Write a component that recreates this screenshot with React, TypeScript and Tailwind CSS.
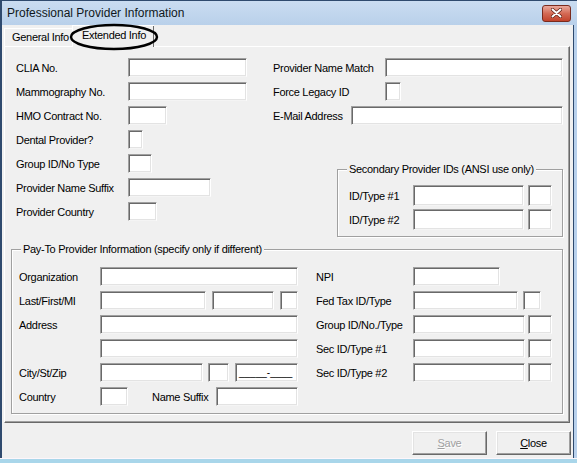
import React from 'react';
import clsx from 'clsx';

const sunken =
  'bg-white border border-t-[#a0a0a0] border-l-[#a0a0a0] border-r-white border-b-[#f4f4f4] shadow-[inset_1px_1px_0_#696969,inset_-1px_-1px_0_#e3e3e3]';

function Box({ className, tall, children }: { className: string; tall?: boolean; children?: React.ReactNode }) {
  return <div className={clsx(sunken, tall ? 'h-[21px]' : 'h-[19px]', 'shrink-0', className)}>{children}</div>;
}

function Row({ label, labelW, children, tall }: { label: string; labelW: string; children?: React.ReactNode; tall?: boolean }) {
  return (
    <div className={clsx('flex items-center', tall ? 'h-[21px]' : 'h-[19px]')}>
      <span className={clsx('shrink-0 whitespace-nowrap pt-px', labelW)}>{label}</span>
      {children}
    </div>
  );
}

function GroupBox({ title, className, children }: { title: string; className: string; children: React.ReactNode }) {
  return (
    <div className={clsx('relative border border-[#a0a0a0] shadow-[1px_1px_0_#fff,inset_1px_1px_0_#fff]', className)}>
      <span className="absolute left-[9px] top-[-8px] bg-[#f0f0f0] px-[2px] leading-[14px] whitespace-nowrap">{title}</span>
      {children}
    </div>
  );
}

function Button({ label, disabled }: { label: string; disabled?: boolean }) {
  return (
    <div className="flex h-[24px] w-[75px] items-center justify-center border border-t-white border-l-white border-r-[#696969] border-b-[#696969] bg-[#f0f0f0] shadow-[inset_-1px_-1px_0_#a0a0a0,inset_1px_1px_0_#e3e3e3]">
      <span className={disabled ? 'text-[#a0a0a0] [text-shadow:1px_1px_0_#fff]' : 'text-black'}>
        <span className="underline">{label[0]}</span>
        {label.slice(1)}
      </span>
    </div>
  );
}

export default function App() {
  return (
    <div className="relative flex h-[463px] w-[577px] flex-col overflow-hidden bg-[#b9d1ec] font-['Liberation_Sans',Arial,sans-serif] text-[11px] tracking-[-0.3px] text-black">
      {/* title bar */}
      <div className="flex h-[25px] shrink-0 items-center justify-between border-t border-l-2 border-[#2f4a6e] bg-[linear-gradient(#cadcf1,#b9d0ea)] pl-[5px] pr-[6px] tracking-normal">
        <span className="text-[12px] text-[#101820]">Professional Provider Information</span>
        <div className="flex h-[17px] w-[29px] items-center justify-center rounded-[3px] border border-[#7a2b1e] bg-[linear-gradient(#e9a99d,#d46a55_50%,#c2432c)]">
          <svg width="11" height="10" viewBox="0 0 11 10">
            <path d="M1.5 1.5 L9.5 8.5 M9.5 1.5 L1.5 8.5" stroke="#5a1a10" strokeWidth="3.4" strokeLinecap="round" />
            <path d="M1.5 1.5 L9.5 8.5 M9.5 1.5 L1.5 8.5" stroke="#fff" strokeWidth="2" strokeLinecap="round" />
          </svg>
        </div>
      </div>

      {/* client */}
      <div className="flex flex-1 border-l-2 border-[#2f4a6e]">
        <div className="flex flex-1 flex-col bg-[#f0f0f0] pl-[2px]">
          {/* tabs */}
          <div className="relative flex h-[21px] items-end">
            <div className="flex h-[18px] w-[70px] items-center border-t border-l border-white pl-[7px] shadow-[inset_-1px_0_0_#a0a0a0]">
              General Info
            </div>
            <div className="z-10 -mb-px -ml-[2px] flex h-[22px] w-[82px] items-center border-t border-l border-white bg-[#f0f0f0] pb-[2px] pl-[9px] shadow-[inset_-1px_0_0_#696969]">
              Extended Info
            </div>
          </div>

          {/* panel */}
          <div className="flex h-[377px] w-[566px] flex-col border border-t-white border-l-white border-r-[#696969] border-b-[#696969] pl-[6px] pt-[11px] shadow-[inset_-1px_-1px_0_#a0a0a0]">
            <div className="ml-[5px] flex">
              <div className="flex w-[257px] flex-col gap-[5px]">
                <Row label="CLIA No." labelW="w-[112px]"><Box className="w-[119px]" /></Row>
                <Row label="Mammography No." labelW="w-[112px]"><Box className="w-[119px]" /></Row>
                <Row label="HMO Contract No." labelW="w-[112px]"><Box className="w-[39px]" /></Row>
                <Row label="Dental Provider?" labelW="w-[112px]"><Box className="w-[15px]" /></Row>
                <Row label="Group ID/No Type" labelW="w-[112px]"><Box className="w-[24px]" /></Row>
                <Row label="Provider Name Suffix" labelW="w-[112px]"><Box className="w-[83px]" /></Row>
                <Row label="Provider Country" labelW="w-[112px]"><Box className="w-[29px]" /></Row>
              </div>
              <div className="flex flex-col gap-[5px]">
                <Row label="Provider Name Match" labelW="w-[112px]"><Box className="w-[178px]" /></Row>
                <Row label="Force Legacy ID" labelW="w-[112px]"><Box className="w-[16px]" /></Row>
                <Row label="E-Mail Address" labelW="w-[78px]"><Box className="w-[212px]" /></Row>
                <GroupBox title="Secondary Provider IDs (ANSI use only)" className="ml-[64px] mt-[39px] flex h-[68px] w-[226px] flex-col gap-[3px] pl-[11px] pt-[15px]">
                  <Row label="ID/Type #1" labelW="w-[64px]" tall>
                    <Box tall className="w-[111px]" />
                    <Box tall className="ml-[4px] w-[24px]" />
                  </Row>
                  <Row label="ID/Type #2" labelW="w-[64px]" tall>
                    <Box tall className="w-[111px]" />
                    <Box tall className="ml-[4px] w-[24px]" />
                  </Row>
                </GroupBox>
              </div>
            </div>

            <GroupBox title="Pay-To Provider Information (specify only if different)" className="mt-[12px] flex h-[165px] w-[552px] pl-[7px] pt-[17px]">
              <div className="flex w-[297px] flex-col gap-[5px]">
                <Row label="Organization" labelW="w-[81px]"><Box className="w-[198px]" /></Row>
                <Row label="Last/First/MI" labelW="w-[81px]">
                  <Box className="w-[106px]" />
                  <Box className="ml-[6px] w-[62px]" />
                  <Box className="ml-[6px] w-[18px]" />
                </Row>
                <Row label="Address" labelW="w-[81px]"><Box className="w-[198px]" /></Row>
                <Row label="" labelW="w-[81px]"><Box className="w-[198px]" /></Row>
                <Row label="City/St/Zip" labelW="w-[81px]">
                  <Box className="w-[103px]" />
                  <Box className="ml-[5px] w-[21px]" />
                  <Box className="ml-[6px] flex w-[63px] items-center whitespace-nowrap pl-[3px] text-[10px] leading-none tracking-normal">_____-____</Box>
                </Row>
                <Row label="Country" labelW="w-[81px]">
                  <Box className="w-[28px]" />
                  <span className="ml-[24px] w-[64px] shrink-0 pt-px">Name Suffix</span>
                  <Box className="w-[82px]" />
                </Row>
              </div>
              <div className="flex flex-col gap-[5px]">
                <Row label="NPI" labelW="w-[97px]"><Box className="w-[87px]" /></Row>
                <Row label="Fed Tax ID/Type" labelW="w-[97px]">
                  <Box className="w-[105px]" />
                  <Box className="ml-[5px] w-[18px]" />
                </Row>
                <Row label="Group ID/No./Type" labelW="w-[97px]">
                  <Box className="w-[112px]" />
                  <Box className="ml-[3px] w-[24px]" />
                </Row>
                <Row label="Sec ID/Type #1" labelW="w-[97px]">
                  <Box className="w-[112px]" />
                  <Box className="ml-[3px] w-[24px]" />
                </Row>
                <Row label="Sec ID/Type #2" labelW="w-[97px]">
                  <Box className="w-[112px]" />
                  <Box className="ml-[3px] w-[24px]" />
                </Row>
              </div>
            </GroupBox>
          </div>

          {/* buttons */}
          <div className="mt-[8px] flex justify-end gap-[9px] pr-[2px]">
            <Button label="Save" disabled />
            <Button label="Close" />
          </div>
        </div>
        <div className="w-[4px] border-l border-[#2f4a6e] bg-[#b9d1ec]" />
      </div>
      <div className="h-[5px] shrink-0 border-t border-[#fdf6fb] bg-[#a9d6ea]" />

      {/* hand-drawn highlight around the tab */}
      <svg className="pointer-events-none absolute left-[69px] top-[23px] z-20" width="92" height="28" viewBox="0 0 92 28">
        <ellipse cx="45" cy="14" rx="43" ry="12" fill="none" stroke="#000" strokeWidth="2.5" />
      </svg>
    </div>
  );
}
